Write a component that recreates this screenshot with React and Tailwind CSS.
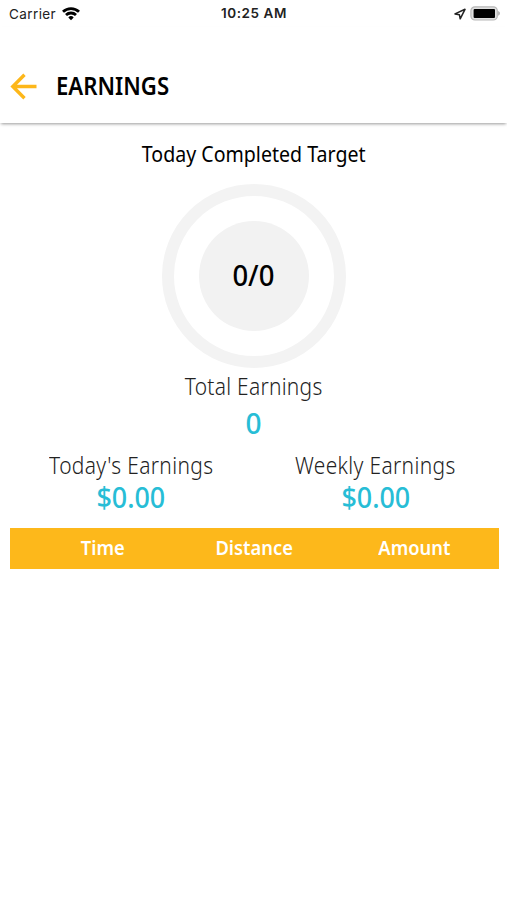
import { clsx } from "clsx";

const COLUMNS = [
  { label: "Time", pad: "pl-[24px]" },
  { label: "Distance", pad: "" },
  { label: "Amount", pad: "pr-[6px]" },
];

function StatusBar() {
  return (
    <div className="grid h-[27px] grid-cols-3 items-center pr-[6px] pl-[9px] font-['Inter',sans-serif] text-[13.5px] text-[#222]">
      <div className="flex items-center gap-[6px]">
        <span className="pt-px tracking-[0.4px]">Carrier</span>
        <svg width="18" height="14" viewBox="0 0 18 14" fill="none" stroke="#000" strokeWidth="2.8">
          <path d="M1 4.8a11.5 11.5 0 0 1 16 0" />
          <path d="M4 8a7.2 7.2 0 0 1 10 0" />
          <path d="M6.3 10.4a3.9 3.9 0 0 1 5.4 0L9 13.3z" fill="#000" stroke="none" />
        </svg>
      </div>
      <span className="-ml-[2px] text-center font-semibold tracking-[0.55px] whitespace-nowrap">10:25 AM</span>
      <div className="flex items-center justify-end gap-[4px]">
        <svg width="12" height="12" viewBox="0 0 12 12" fill="none" stroke="#222" strokeWidth="1.5" strokeLinejoin="round">
          <path d="M11 1.3 1 5.9l4.4.8.8 4.1z" />
        </svg>
        <svg width="31" height="15" viewBox="0 0 31 15">
          <rect x="0.9" y="0.8" width="26.4" height="13.2" rx="4" fill="#e0e0e0" stroke="#b8b8b8" strokeWidth="1.2" />
          <rect x="3.6" y="3" width="21.4" height="9" rx="1" fill="#000" />
          <path d="M28.2 5.1c2.2.9 2.2 3.7 0 4.6z" fill="#aaa" />
        </svg>
      </div>
    </div>
  );
}

function Header() {
  return (
    <header className="flex h-[96px] items-center pt-[22px] pl-[10px] shadow-[0_2px_3px_-1px_rgba(0,0,0,0.4)]">
      <svg width="28" height="28" viewBox="0 0 28 28" fill="none" stroke="#fdb71a" strokeWidth="3.4">
        <path d="M26.5 14.5H3M14.5 2.8 2.8 14.5l11.7 11.7" />
      </svg>
      <h1 className="-mt-[2px] ml-[18px] origin-left scale-x-[0.886] text-[25px] leading-[32px] font-semibold">EARNINGS</h1>
    </header>
  );
}

function Stat({ label, value }) {
  return (
    <div className="flex flex-col items-center">
      <span className="scale-x-[0.91] text-[23px] leading-[32px] font-light tracking-[0.4px] whitespace-nowrap text-[#222]">{label}</span>
      <span className="scale-x-[0.96] text-[28px] leading-[32px] font-medium text-[#27bdd6]">{value}</span>
    </div>
  );
}

export default function App() {
  return (
    <div className="h-[900px] overflow-hidden bg-white font-['Noto_Sans',sans-serif] text-black">
      <StatusBar />
      <Header />

      <main className="flex flex-col items-center pt-[14px]">
        <h2 className="scale-x-[0.89] text-[22px] leading-[32px] whitespace-nowrap">Today Completed Target</h2>

        {/* Target ring */}
        <div className="mt-[15px] flex size-[184px] items-center justify-center rounded-full border-[12px] border-[#f3f3f3]">
          <div className="flex size-[110px] items-center justify-center rounded-full bg-[#f2f2f2]">
            <span className="-mt-[2px] scale-x-[0.98] text-[28px] leading-none font-medium">0/0</span>
          </div>
        </div>

        {/* Totals */}
        <div className="mt-[2px] flex flex-col items-center">
          <span className="scale-x-[0.91] text-[23px] leading-[32px] font-light tracking-[0.3px] whitespace-nowrap text-[#222]">Total Earnings</span>
          <span className="mt-[5px] text-[28px] leading-[32px] font-medium text-[#27bdd6]">0</span>
        </div>
        <div className="mt-[10px] grid w-[489px] grid-cols-2">
          <Stat label="Today's Earnings" value="$0.00" />
          <Stat label="Weekly Earnings" value="$0.00" />
        </div>

        {/* Trip table header */}
        <div className="mt-[15px] ml-px grid h-[41px] w-[489px] grid-cols-3 items-center bg-[#fdb81b] text-[19px] font-semibold text-white">
          {COLUMNS.map((col) => (
            <div key={col.label} className={clsx("flex justify-center", col.pad)}>
              <span className="scale-x-[0.965]">{col.label}</span>
            </div>
          ))}
        </div>
      </main>
    </div>
  );
}
